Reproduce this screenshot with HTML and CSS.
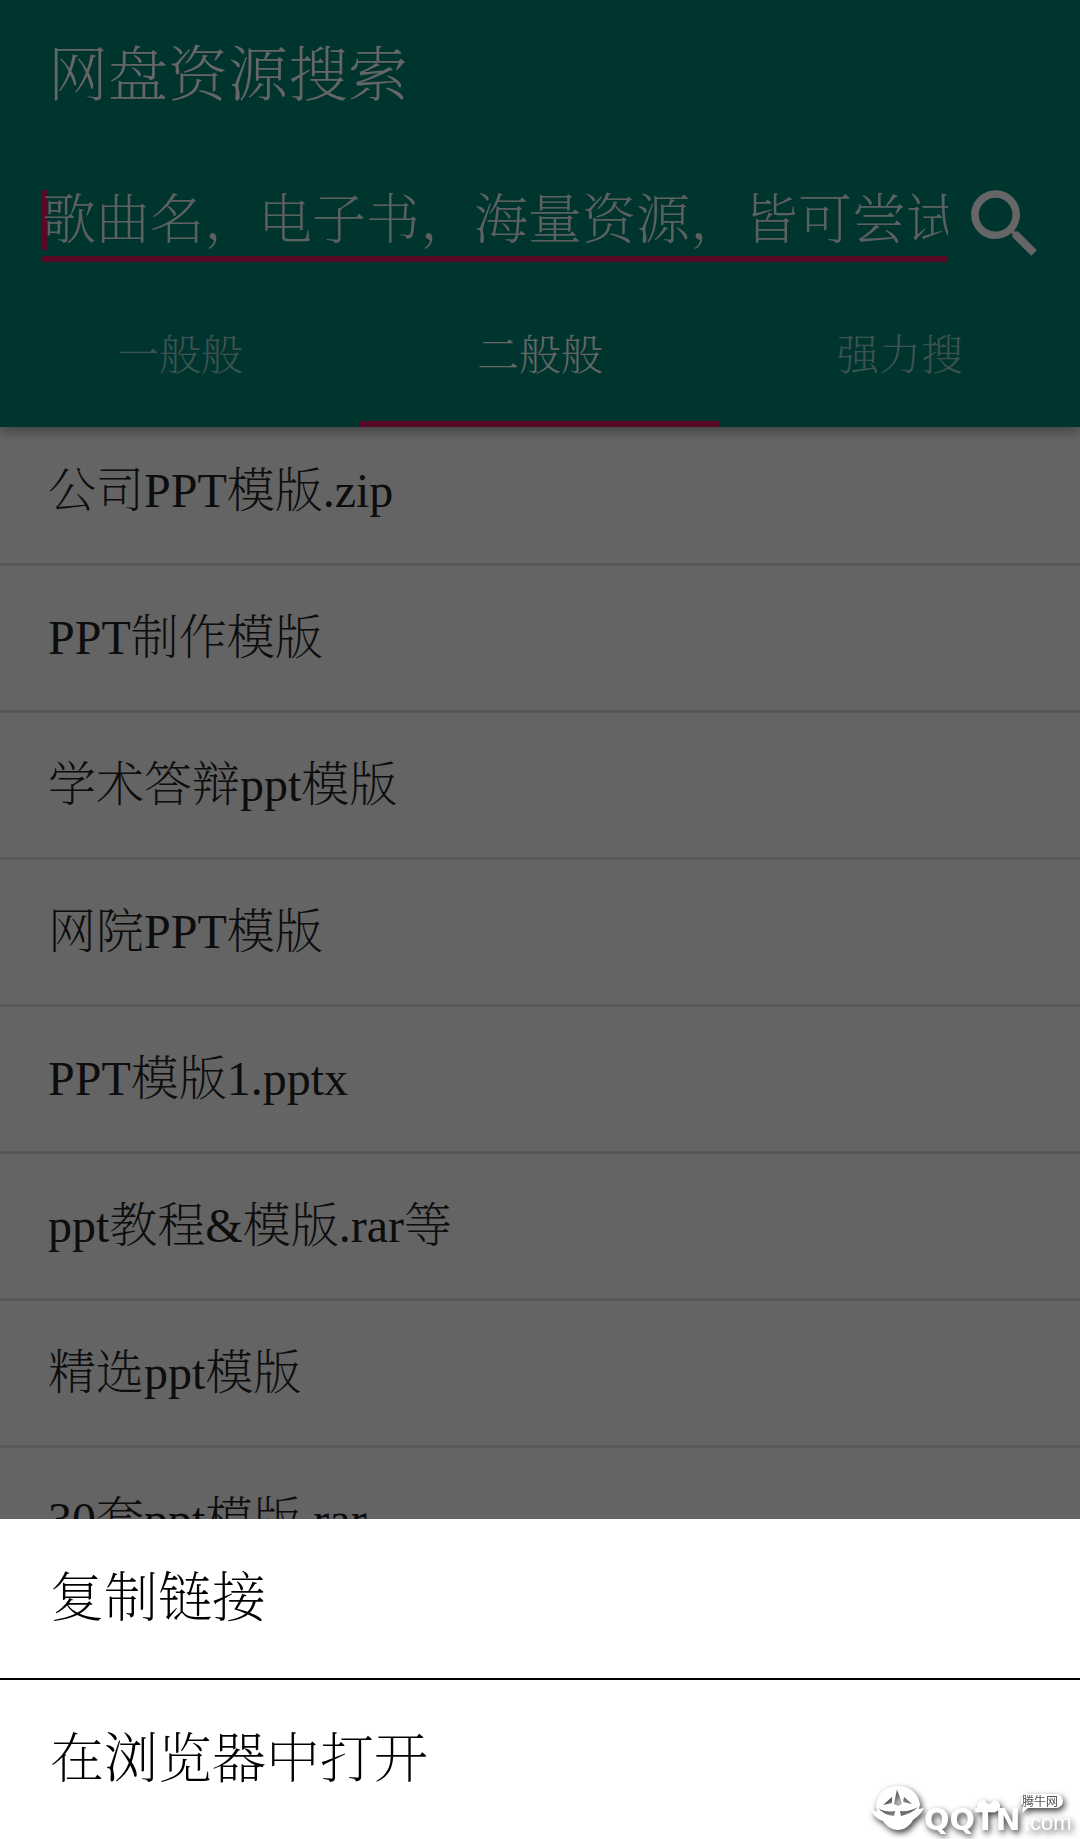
FILE: index.html
```html
<!DOCTYPE html>
<html lang="zh-CN">

<head>
    <meta charset="utf-8">
    <title>网盘资源搜索</title>
    <meta name="viewport" content="width=device-width, initial-scale=1">
    <link rel="stylesheet" href="styles.css">
</head>

<body>
    <header class="app-bar">
        <h1>网盘资源搜索</h1>
        <form class="search">
            <div class="field">
                <input type="text" id="keyword" aria-label="搜索" placeholder="歌曲名，电子书，海量资源，皆可尝试">
                <span class="caret"></span>
            </div>
            <button type="button" class="search-btn" aria-label="搜索">
                <svg viewBox="0 0 24 24">
                    <path d="M15.5 14h-.79l-.28-.27C15.41 12.59 16 11.11 16 9.5 16 5.91 13.09 3 9.5 3S3 5.91 3 9.5 5.91 16 9.5 16c1.61 0 3.09-.59 4.23-1.57l.27.28v.79l5 4.99L20.49 19l-4.99-5zm-6 0C7.01 14 5 11.99 5 9.5S7.01 5 9.5 5 14 7.01 14 9.5 11.99 14 9.5 14z" />
                </svg>
            </button>
        </form>
        <nav class="tabs">
            <button type="button">一般般</button>
            <button type="button" class="active">二般般</button>
            <button type="button">强力搜</button>
        </nav>
    </header>

    <ul class="results">
        <li>公司PPT模版.zip</li>
        <li>PPT制作模版</li>
        <li>学术答辩ppt模版</li>
        <li>网院PPT模版</li>
        <li>PPT模版1.pptx</li>
        <li>ppt教程&amp;模版.rar等</li>
        <li>精选ppt模版</li>
        <li>30套ppt模版.rar</li>
    </ul>

    <div class="scrim"></div>

    <div class="sheet">
        <button type="button">复制链接</button>
        <button type="button">在浏览器中打开</button>
    </div>

    <svg class="watermark" viewBox="0 0 214 59">
        <g class="raised">
            <!-- bull head -->
            <path fill-rule="evenodd" d="M10 25C11 13 20 6 32 6s20 7 22 18l-1 5 5-1c-3 6-7 9-11 12-3 6-9 10-15 10s-12-4-15-9C11 39 7 35 5 29l6 3z
                M31 9l-3 15 4 2 4-2zM17 25l9-2v-6zM46 24l-9-2 1-5zM12 28q8 5 17 3l-1 5q-10-1-16-8zM52 27q-7 7-17 9l-1-5q10 1 18-4z" />
            <path d="M111 26c0-4 3-6 8-6 0 5 8 5 8 0 4 0 7 2 7 6s-3 6-7 6h-9c-4 0-7-2-7-6z" />
            <text class="brand" x="58" y="50">QQTN</text>
            <text class="domain" x="158" y="50">.com</text>
            <path d="M162 14h28a7 7 0 0 1 0 14h-28l-6 5 1-7a7 7 0 0 1 5-12z" />
        </g>
        <text class="badge" x="156" y="26">腾牛网</text>
    </svg>
</body>

</html>
```

FILE: styles.css
```css
* {
    box-sizing: border-box;
}

html,
body {
    margin: 0;
    height: 100%;
}

body {
    display: flex;
    flex-flow: column;
    overflow: hidden;
    background-color: #fafafa;
    color: #222;
    font-family: "Liberation Serif", "Noto Serif CJK SC", "Noto Sans CJK SC", serif;
    font-weight: 200;
}

button,
input {
    margin: 0;
    padding: 0;
    border: 0;
    background: none;
    color: inherit;
    font: inherit;
}

.app-bar {
    position: relative;
    z-index: 1;
    background-color: #008577;
    color: #fff;
    box-shadow: 0 3px 12px rgba(0, 0, 0, .4);
}

.app-bar h1 {
    margin: 0;
    padding: 0 48px;
    font-size: 60px;
    font-weight: 200;
    line-height: 152px;
}

.search {
    display: flex;
    align-items: flex-start;
    padding: 27px 30px 23px 42px;
}

.field {
    position: relative;
    flex: 1;
    min-width: 0;
    border-bottom: 6px solid #d81b60;
}

.field input {
    display: block;
    width: 100%;
    height: 77px;
    padding-top: 7px;
    font-size: 54px;
}

.field input::placeholder {
    color: #fff;
    opacity: .9;
}

.caret {
    position: absolute;
    z-index: -1;
    left: 0;
    bottom: 6px;
    width: 6px;
    height: 60px;
    background-color: #d81b60;
}

.search-btn {
    margin-left: 12px;
}

.search-btn svg {
    display: block;
    width: 90px;
    height: 90px;
    fill: #fff;
}

.tabs {
    display: flex;
}

.tabs button {
    flex: 1;
    padding: 0;
    border-bottom: 6px solid transparent;
    font-size: 42px;
    line-height: 129px;
    opacity: .6;
}

.tabs .active {
    border-color: #d81b60;
    opacity: 1;
}

.results {
    margin: -8px 0 0;
    padding: 0;
    list-style: none;
}

.results li {
    padding: 0 48px;
    border-bottom: 3px solid #dcdcdc;
    font-size: 48px;
    line-height: 144px;
}

.scrim {
    position: fixed;
    inset: 0;
    z-index: 2;
    background-color: rgba(0, 0, 0, .6);
}

.sheet {
    position: fixed;
    right: 0;
    bottom: 0;
    left: 0;
    z-index: 3;
    display: flex;
    flex-flow: column;
    background-color: #fff;
    color: #000;
}

.sheet button {
    padding: 2px 50px 0;
    font-size: 54px;
    line-height: 157px;
    text-align: left;
}

.sheet button + button {
    border-top: 2px solid #000;
}

.watermark {
    position: fixed;
    right: 0;
    bottom: 0;
    z-index: 4;
    width: 214px;
    height: 59px;
    fill: #fff;
}

.watermark .raised {
    filter: drop-shadow(2px 3px 3px rgba(0, 0, 0, .75));
}

.watermark .brand {
    font: bold 30px "DejaVu Sans", sans-serif;
}

.watermark .domain {
    font: 22px "Liberation Sans", sans-serif;
}

.watermark .badge {
    fill: #555;
    font: 12px "Noto Sans CJK SC", sans-serif;
}
```
